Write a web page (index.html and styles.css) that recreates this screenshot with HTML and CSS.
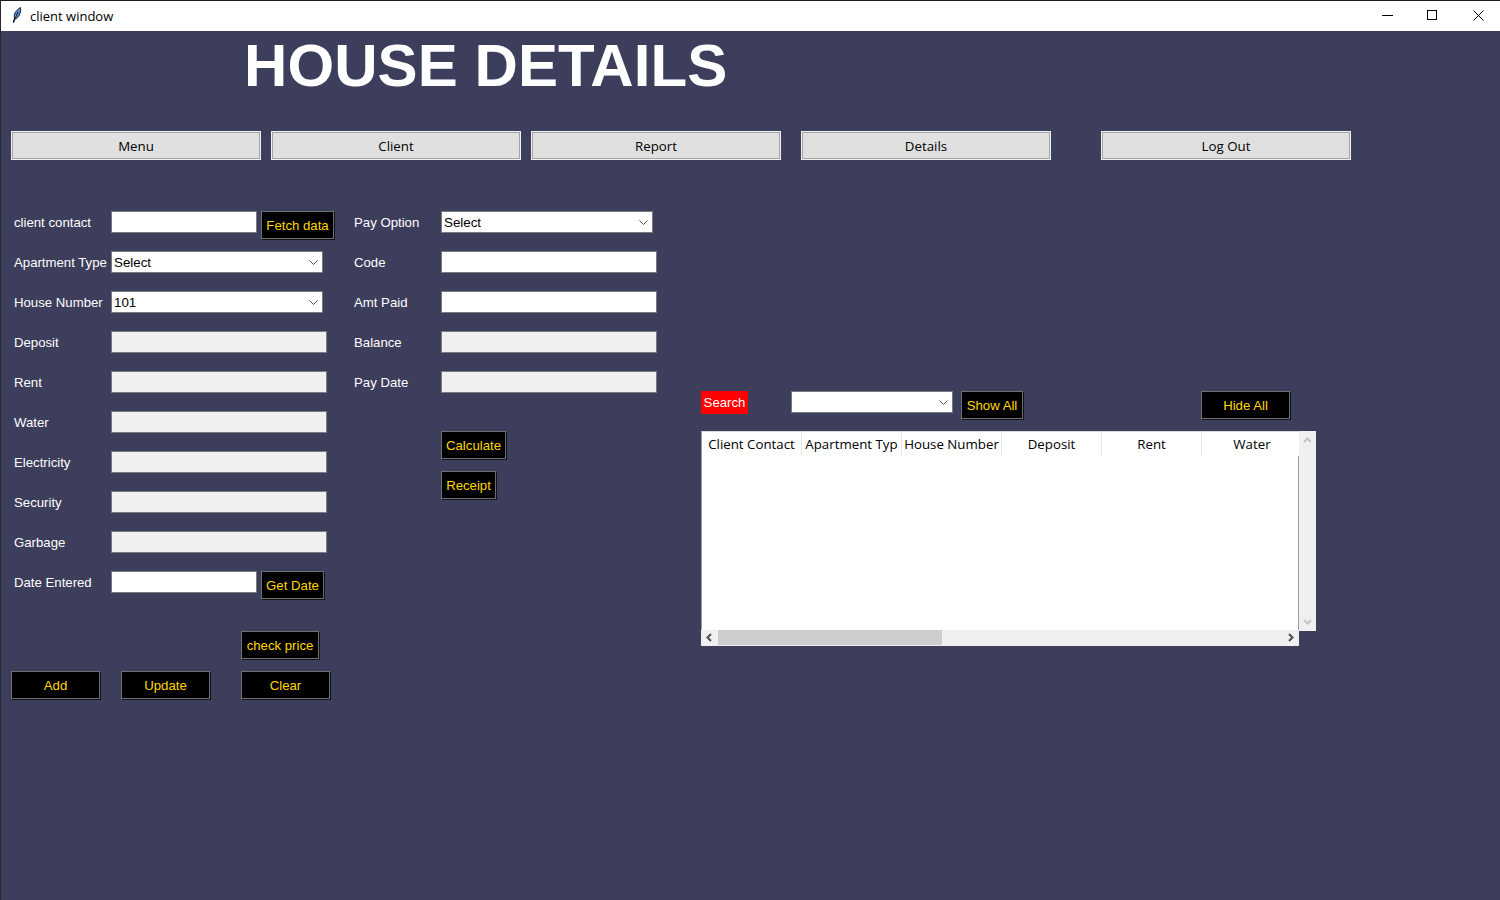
FILE: index.html
```html
<!DOCTYPE html>
<html lang="en">
<head>
    <meta charset="UTF-8">
    <title>client window</title>
    <link rel="stylesheet" href="styles.css">
</head>
<body>
<div class="window">
    <div class="titlebar">
        <svg class="feather" width="14" height="18" viewBox="0 0 14 18">
            <path d="M3.5 15.5 L4.5 11 C3.5 8 5 4 10.5 .5 C11 4 10 9 6.5 11.5 L4.5 12 Z" fill="#5f8ed4" stroke="#14202e" stroke-width="1"/>
            <path d="M3.5 15.5 L8 5" stroke="#14202e" stroke-width="1" fill="none"/>
        </svg>
        <span class="titlebar-text">client window</span>
        <div class="win-controls">
            <svg width="46" height="30" viewBox="-8 0 46 30"><path d="M12 14.5 H23" stroke="#000" fill="none"/></svg>
            <svg width="46" height="30" viewBox="-8 0 46 30"><rect x="11.5" y="9.5" width="9" height="9" stroke="#000" fill="none"/></svg>
            <svg width="46" height="30" viewBox="-8 0 46 30"><path d="M11.5 9.5 L21.5 19.5 M21.5 9.5 L11.5 19.5" stroke="#000" fill="none"/></svg>
        </div>
    </div>

    <div class="content">
        <h1 class="heading">HOUSE DETAILS</h1>

        <nav class="nav">
            <button class="nav-btn">Menu</button>
            <button class="nav-btn">Client</button>
            <button class="nav-btn">Report</button>
            <button class="nav-btn nav-details">Details</button>
            <button class="nav-btn nav-logout">Log Out</button>
        </nav>

        <div class="panels">
            <section class="panel-left">
                <div class="row">
                    <label>client contact</label>
                    <input type="text" class="field-short">
                    <button class="btn btn-fetch">Fetch data</button>
                </div>
                <div class="row">
                    <label>Apartment Type</label>
                    <select class="field-select"><option>Select</option></select>
                </div>
                <div class="row">
                    <label>House Number</label>
                    <select class="field-select"><option>101</option></select>
                </div>
                <div class="row"><label>Deposit</label><input type="text" class="field-long" disabled></div>
                <div class="row"><label>Rent</label><input type="text" class="field-long" disabled></div>
                <div class="row"><label>Water</label><input type="text" class="field-long" disabled></div>
                <div class="row"><label>Electricity</label><input type="text" class="field-long" disabled></div>
                <div class="row"><label>Security</label><input type="text" class="field-long" disabled></div>
                <div class="row"><label>Garbage</label><input type="text" class="field-long" disabled></div>
                <div class="row">
                    <label>Date Entered</label>
                    <input type="text" class="field-short">
                    <button class="btn btn-date">Get Date</button>
                </div>
                <div class="check-row">
                    <button class="btn btn-check">check price</button>
                </div>
                <div class="action-row">
                    <button class="btn btn-action">Add</button>
                    <button class="btn btn-action">Update</button>
                    <button class="btn btn-action btn-clear">Clear</button>
                </div>
            </section>

            <section class="panel-mid">
                <div class="row">
                    <label>Pay Option</label>
                    <select class="field-select"><option>Select</option></select>
                </div>
                <div class="row"><label>Code</label><input type="text" class="field-long"></div>
                <div class="row"><label>Amt Paid</label><input type="text" class="field-long"></div>
                <div class="row"><label>Balance</label><input type="text" class="field-long" disabled></div>
                <div class="row"><label>Pay Date</label><input type="text" class="field-long" disabled></div>
                <div class="mid-actions">
                    <button class="btn btn-calc">Calculate</button>
                    <button class="btn btn-receipt">Receipt</button>
                </div>
            </section>

            <section class="panel-right">
                <div class="search-row">
                    <span class="search-label">Search</span>
                    <select class="field-select search-select"><option></option></select>
                    <button class="btn btn-show">Show All</button>
                    <button class="btn btn-action btn-hide">Hide All</button>
                </div>
                <div class="tree">
                    <div class="tree-body">
                        <div class="tree-head">
                            <span>Client Contact</span>
                            <span>Apartment Typ</span>
                            <span>House Number</span>
                            <span>Deposit</span>
                            <span>Rent</span>
                            <span>Water</span>
                        </div>
                        <div class="tree-rows"></div>
                    </div>
                    <div class="vbar">
                        <svg width="9" height="6" viewBox="0 0 9 6"><path d="M1 5 L4.5 1.5 L8 5" stroke="#c4c4c4" stroke-width="2" fill="none"/></svg>
                        <svg width="9" height="6" viewBox="0 0 9 6"><path d="M1 1 L4.5 4.5 L8 1" stroke="#c4c4c4" stroke-width="2" fill="none"/></svg>
                    </div>
                    <div class="hbar">
                        <svg class="hbar-arrow" width="6" height="9" viewBox="0 0 6 9"><path d="M5 1 L1.5 4.5 L5 8" stroke="#505050" stroke-width="2" fill="none"/></svg>
                        <div class="hbar-thumb"></div>
                        <svg class="hbar-arrow hbar-next" width="6" height="9" viewBox="0 0 6 9"><path d="M1 1 L4.5 4.5 L1 8" stroke="#505050" stroke-width="2" fill="none"/></svg>
                    </div>
                </div>
            </section>
        </div>
    </div>
</div>
</body>
</html>
```

FILE: styles.css
```css
* {
    box-sizing: border-box;
}
body {
    margin: 0;
    font-family: "Open Sans", "Liberation Sans", sans-serif;
    font-size: 13px;
    overflow: hidden;
}
.window {
    width: 1500px;
    height: 900px;
    display: flex;
    flex-direction: column;
    border-top: 1px solid #1c1c1c;
    border-left: 1px solid #2a2a2a;
    background: #3d3d5c;
}
.titlebar {
    height: 30px;
    flex: none;
    background: #fff;
    display: flex;
    align-items: center;
    padding-left: 9px;
    color: #000;
}
.titlebar-text {
    margin-left: 6px;
}
.win-controls {
    margin-left: auto;
    display: flex;
    height: 30px;
}
.content {
    flex: 1;
    color: #fff;
}
.heading {
    margin: 0 0 0 243px;
    height: 100px;
    font-family: "Liberation Sans", Arial, sans-serif;
    font-size: 60px;
    font-weight: bold;
    line-height: 70px;
    letter-spacing: 0.08px;
}
.nav {
    display: flex;
    padding-left: 10px;
    gap: 10px;
}
.nav-btn {
    width: 250px;
    height: 29px;
    background: #e0e0e0;
    border: 1px solid #f2f2f2;
    box-shadow: inset 0 0 0 1px #a3a3a3;
    font: inherit;
    font-size: 13.3px;
    color: #000;
    padding: 0;
}
.nav-details {
    margin-left: 10px;
}
.nav-logout {
    margin-left: 40px;
}
.panels {
    display: flex;
    margin-top: 51px;
    padding-left: 10px;
}
.panel-left {
    width: 343px;
}
.panel-mid {
    width: 347px;
}
.row {
    height: 40px;
    display: flex;
    align-items: flex-start;
}
.row label {
    width: 100px;
    padding-left: 3px;
    font-family: "Liberation Sans", Arial, sans-serif;
    font-size: 13.2px;
    line-height: 23px;
    white-space: nowrap;
}
.panel-mid .row label {
    width: 87px;
    padding-left: 0;
}
input, select {
    height: 22px;
    border: 1px solid #7a7a7a;
    border-radius: 0;
    background: #fff;
    font-family: "Liberation Sans", Arial, sans-serif;
    font-size: 13.33px;
    color: #000;
    padding: 0 2px;
    margin: 0;
}
input:disabled {
    background: #f0f0f0;
}
select {
    appearance: none;
    background-image: url("data:image/svg+xml,%3Csvg xmlns='http://www.w3.org/2000/svg' width='9' height='5'%3E%3Cpath d='M.5.5l4 4 4-4' stroke='%23505050' fill='none'/%3E%3C/svg%3E");
    background-repeat: no-repeat;
    background-position: right 4px center;
}
.field-short {
    width: 146px;
}
.field-long {
    width: 216px;
}
.field-select {
    width: 212px;
}
.btn {
    height: 28px;
    background: #000;
    color: #ffd700;
    border: 1px solid #6e6e6e;
    box-shadow: 1px 1px 0 #111;
    font-family: "Liberation Sans", Arial, sans-serif;
    font-size: 13.2px;
    padding: 0;
}
.btn-fetch {
    width: 73px;
    margin-left: 4px;
}
.btn-date {
    width: 63px;
    margin-left: 4px;
}
.check-row {
    height: 40px;
    margin-top: 20px;
    padding-left: 230px;
}
.btn-check {
    width: 78px;
}
.action-row {
    display: flex;
}
.btn-action {
    width: 89px;
    margin-right: 21px;
}
.btn-clear {
    margin-left: 10px;
}
.mid-actions {
    margin-top: 20px;
    padding-left: 87px;
    display: flex;
    flex-direction: column;
    align-items: flex-start;
    gap: 12px;
}
.btn-calc {
    width: 65px;
}
.btn-receipt {
    width: 55px;
}
.panel-right {
    margin-top: 180px;
}
.search-row {
    height: 40px;
    display: flex;
    align-items: flex-start;
}
.search-label {
    width: 47px;
    height: 23px;
    font-family: "Liberation Sans", Arial, sans-serif;
    font-size: 13.2px;
    line-height: 23px;
    background: #f00;
    color: #fff;
    text-align: center;
}
.search-select {
    width: 162px;
    margin-left: 43px;
}
.btn-show {
    width: 62px;
    margin-left: 8px;
}
.btn-hide {
    margin-left: 178px;
}
.tree {
    display: grid;
    grid-template-columns: 598px 17px;
    grid-template-rows: 199px 16px;
}
.tree-body {
    display: flex;
    flex-direction: column;
    background: #fff;
    border-left: 1px solid #9a9aa8;
    border-top: 1px solid #d8d8e0;
}
.tree-head {
    display: flex;
    height: 24px;
    flex: none;
    overflow: hidden;
    color: #000;
    font-size: 13.3px;
}
.tree-head span {
    width: 100px;
    flex: none;
    text-align: center;
    line-height: 24px;
    border-right: 1px solid #e5e5e5;
    white-space: nowrap;
    overflow: hidden;
}
.tree-head span:last-child {
    border-right: none;
}
.tree-rows {
    flex: 1;
    border-right: 1px solid #9a9aa8;
}
.vbar {
    height: 200px;
    background: #f0f0f0;
    display: flex;
    flex-direction: column;
    justify-content: space-between;
    align-items: center;
    padding: 6px 0;
}
.hbar {
    display: flex;
    align-items: center;
    height: 16px;
    padding-bottom: 1px;
    background: #f0f0f0;
}
.hbar-arrow {
    margin-left: 5px;
    flex: none;
}
.hbar-thumb {
    width: 224px;
    height: 15px;
    margin-left: 6px;
    background: #cdcdcd;
}
.hbar-next {
    margin-left: auto;
    margin-right: 5px;
}
```
